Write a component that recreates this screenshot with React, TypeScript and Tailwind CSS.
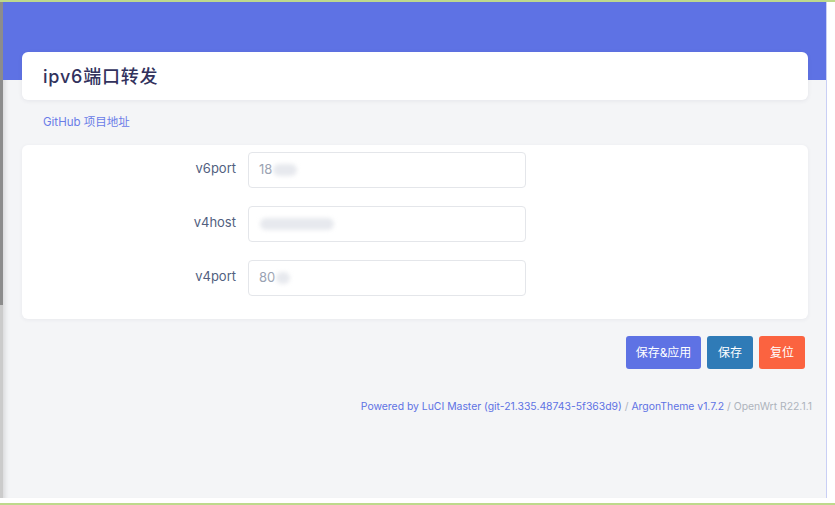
import React from 'react';

const fields = [
  { id: 'v6port', label: 'v6port', value: '18', blur: 'w-[24px]' },
  { id: 'v4host', label: 'v4host', value: '', blur: 'w-[74px]' },
  { id: 'v4port', label: 'v4port', value: '80', blur: 'w-[14px]' },
];

function Field({ label, value, blur }: { label: string; value: string; blur: string }) {
  return (
    <div className="flex items-start">
      <label className="w-[226px] shrink-0 pr-[12px] pt-[6px] text-right text-[13px] leading-[20px] text-[#525f7f]">
        {label}
      </label>
      <div className="flex h-[36px] w-[278px] items-center rounded-[4px] border border-[#e4e6ea] bg-white px-[10px] text-[13px] text-[#9aa3b3]">
        <span>{value}</span>
        <span className={`ml-[1px] h-[12px] ${blur} rounded-full bg-[#e7e9ee] blur-[2px]`} />
      </div>
    </div>
  );
}

export default function App() {
  return (
    <div className="flex h-[505px] w-[835px] flex-col bg-white font-['Inter','Noto_Sans_CJK_SC',sans-serif]">
      <div className="h-[2px] bg-[#bdd98c]" />
      <div className="flex h-[496px]">
        {/* left window edge */}
        <div className="flex w-[3px] flex-col">
          <div className="h-[303px] bg-[#8c8c8c]" />
          <div className="flex-1 bg-[#cbcbcb]" />
        </div>

        <main className="flex w-[823px] flex-col bg-[#f4f5f7] shadow-[inset_6px_0_5px_-4px_rgba(0,0,0,0.12)]">
          <div className="h-[78px] shrink-0 bg-[#5e72e4]" />

          <div className="-mt-[28px] pl-[19px] pr-[18px]">
            <div className="flex h-[48px] items-center rounded-[6px] bg-white pl-[21px] shadow-[0_1px_4px_rgba(50,50,93,0.08)]">
              <h2 className="text-[18px] font-medium tracking-[0.8px] text-[#32325d]">ipv6端口转发</h2>
            </div>

            <a className="mt-[13px] block pl-[21px] text-[11.5px] leading-[18px] text-[#6a7ce8]">
              GitHub 项目地址
            </a>

            <div className="mt-[14px] flex flex-col gap-[18px] rounded-[6px] bg-white pb-[23px] pt-[7px] shadow-[0_1px_4px_rgba(50,50,93,0.06)]">
              {fields.map((f) => (
                <Field key={f.id} label={f.label} value={f.value} blur={f.blur} />
              ))}
            </div>

            <div className="mt-[17px] flex justify-end gap-[6px] pr-[3px]">
              <button className="h-[33px] w-[75px] rounded-[3px] bg-[#5e72e4] text-[12px] text-white">保存&amp;应用</button>
              <button className="h-[33px] w-[46px] rounded-[3px] bg-[#2f7bb7] text-[12px] text-white">保存</button>
              <button className="h-[33px] w-[46px] rounded-[3px] bg-[#fb6340] text-[12px] text-white">复位</button>
            </div>
          </div>

          <footer className="mt-[30px] pr-[14px] text-right text-[10.4px] leading-[16px] text-[#aeb4bd]">
            <a className="text-[#5e72e4]">Powered by LuCI Master (git-21.335.48743-5f363d9)</a> /{' '}
            <a className="text-[#5e72e4]">ArgonTheme v1.7.2</a> / OpenWrt R22.1.1
          </footer>
        </main>

        {/* right window edge */}
        <div className="flex flex-1">
          <div className="w-[1px] bg-[#c9cff5]" />
          <div className="flex-1 bg-white" />
        </div>
      </div>
      <div className="h-[5px] bg-white" />
      <div className="h-[2px] bg-[#bdd98c]" />
    </div>
  );
}
